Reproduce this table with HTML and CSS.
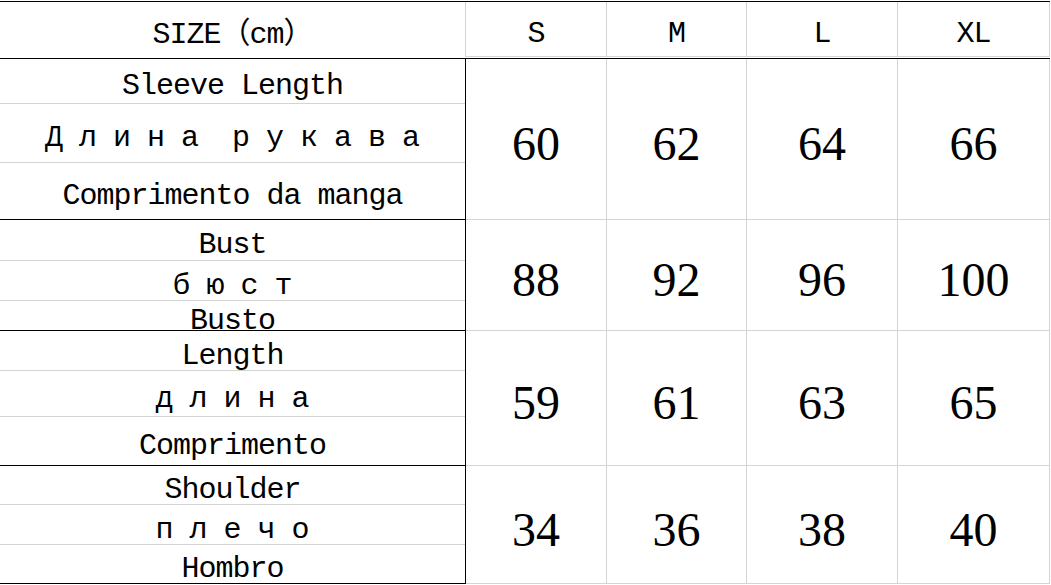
FILE: index.html
```html
<!DOCTYPE html>
<html lang="en">
<head>
<meta charset="utf-8">
<title>Size chart</title>
<link rel="stylesheet" href="styles.css">
</head>
<body>
<div class="chart">
  <div class="head">
    <div class="hcell first"><span class="label">SIZE（cm）</span></div>
    <div class="hcell"><span class="label">S</span></div>
    <div class="hcell"><span class="label">M</span></div>
    <div class="hcell"><span class="label">L</span></div>
    <div class="hcell"><span class="label">XL</span></div>
  </div>

  <div class="group g1">
    <div class="labels">
      <div class="sub"><span class="label">Sleeve Length</span></div>
      <div class="sub"><span class="label ru">Длина рукава</span></div>
      <div class="sub"><span class="label">Comprimento da manga</span></div>
    </div>
    <div class="num">60</div>
    <div class="num">62</div>
    <div class="num">64</div>
    <div class="num">66</div>
  </div>

  <div class="group g2">
    <div class="labels">
      <div class="sub"><span class="label">Bust</span></div>
      <div class="sub"><span class="label ru">бюст</span></div>
      <div class="sub"><span class="label">Busto</span></div>
    </div>
    <div class="num">88</div>
    <div class="num">92</div>
    <div class="num">96</div>
    <div class="num">100</div>
  </div>

  <div class="group g3">
    <div class="labels">
      <div class="sub"><span class="label">Length</span></div>
      <div class="sub"><span class="label ru">длина</span></div>
      <div class="sub"><span class="label">Comprimento</span></div>
    </div>
    <div class="num">59</div>
    <div class="num">61</div>
    <div class="num">63</div>
    <div class="num">65</div>
  </div>

  <div class="group g4">
    <div class="labels">
      <div class="sub"><span class="label">Shoulder</span></div>
      <div class="sub"><span class="label ru">плечо</span></div>
      <div class="sub"><span class="label">Hombro</span></div>
    </div>
    <div class="num">34</div>
    <div class="num">36</div>
    <div class="num">38</div>
    <div class="num">40</div>
  </div>
</div>
</body>
</html>
```

FILE: styles.css
```css
* {
  box-sizing: border-box;
}

html,
body {
  margin: 0;
  background: #ffffff;
}

body {
  padding-top: 1px;
  color: #000000;
}

.chart {
  width: 1050px;
  border-top: 1px solid #000000;
}

.head,
.group {
  display: grid;
  grid-template-columns: 466px 141px 140px 151px 152px;
}

.head {
  height: 57px;
  padding-bottom: 1px;
  border-bottom: 1px solid #000000;
}

.hcell {
  height: 55px;
  display: flex;
  align-items: center;
  justify-content: center;
  padding-top: 10px;
  border-right: 1px solid #d4d4d4;
  border-bottom: 1px solid #d4d4d4;
}

.hcell.first {
  border-bottom: none;
}

.label {
  font-family: "Liberation Mono", "Noto Sans CJK SC", monospace;
  font-size: 30px;
  line-height: 30px;
  letter-spacing: -1px;
  white-space: nowrap;
}

.label.ru {
  letter-spacing: 16px;
  word-spacing: -17px;
  padding-left: 16px;
}

.labels {
  display: grid;
  border-right: 1px solid #000000;
  border-bottom: 1px solid #000000;
}

.sub {
  display: flex;
  align-items: center;
  justify-content: center;
  padding-top: 10px;
  min-height: 0;
  border-bottom: 1px solid #d4d4d4;
}

.sub:last-child {
  border-bottom: none;
}

.g1 { grid-template-rows: 161px; }
.g1 .labels { grid-template-rows: 45px 59px 56px; }

.g2 { grid-template-rows: 111px; }
.g2 .labels { grid-template-rows: 41px 40px 29px; }

.g3 { grid-template-rows: 135px; }
.g3 .labels { grid-template-rows: 40px 46px 48px; }

.g4 { grid-template-rows: 118px; }
.g4 .labels { grid-template-rows: 39px 40px 38px; }

.num {
  display: flex;
  align-items: center;
  justify-content: center;
  padding-top: 10px;
  border-right: 1px solid #d4d4d4;
  border-bottom: 1px solid #d4d4d4;
  font-family: "Liberation Serif", "Times New Roman", serif;
  font-size: 48px;
  line-height: 48px;
}
```
